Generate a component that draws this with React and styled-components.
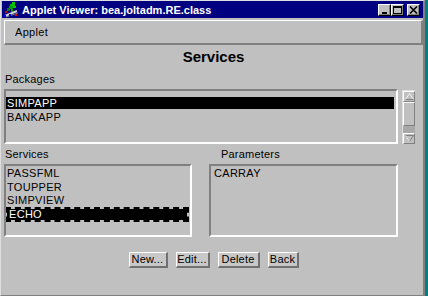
import React from 'react';
import styled, { createGlobalStyle } from 'styled-components';

const Global = createGlobalStyle`
  html, body { margin: 0; padding: 0; background: #008080; overflow: hidden; }
  body { font-family: "Liberation Sans", Arial, sans-serif; font-size: 11px; color: #000; }
  * { box-sizing: border-box; }
`;

const Window = styled.div`
  width: 425px;
  height: 296px;
  background: #c0c0c0;
  border-top: 1px solid #dfdfdf;
  border-left: 1px solid #dfdfdf;
  border-right: 2px solid #808080;
  border-bottom: 1px solid #808080;
  display: flex;
  flex-direction: column;
`;

const TitleBar = styled.div`
  height: 17px;
  margin-left: 1px;
  background: #000080;
  display: flex;
  align-items: center;
  padding: 0 3px 0 2px;
`;

const TitleText = styled.div`
  flex: 1;
  margin-left: 3px;
  color: #fff;
  font-weight: bold;
  font-size: 11px;
  white-space: nowrap;
`;

const WinButtons = styled.div`
  display: flex;
  align-items: center;
`;

const WinButton = styled.div`
  width: 13px;
  height: 12px;
  margin-left: ${p => p.$gap || 0}px;
  background: #c0c0c0;
  border-top: 1px solid #fff;
  border-left: 1px solid #fff;
  border-right: 1px solid #000;
  border-bottom: 1px solid #000;
  box-shadow: inset -1px -1px 0 #808080;
  display: flex;
  align-items: center;
  justify-content: center;
`;

const MenuBar = styled.div`
  height: 25px;
  margin: 2px 0 0 3px;
  border-top: 1px solid #fff;
  border-left: 1px solid #fff;
  border-bottom: 2px solid #808080;
  border-right: 2px solid #808080;
  display: flex;
  align-items: center;
  padding-left: 10px;
`;

const MenuItem = styled.span`
  font-size: 11px;
  letter-spacing: 0.3px;
`;

const Content = styled.div`
  display: flex;
  flex-direction: column;
  padding-left: 3px;
  padding-right: 8px;
`;

const Heading = styled.div`
  height: 24px;
  line-height: 24px;
  text-align: center;
  font-size: 15px;
  font-weight: bold;
  padding-left: 8px;
`;

const Label = styled.div`
  height: 20px;
  padding-top: 3px;
  line-height: 14px;
  padding-left: ${p => p.$indent || 1}px;
  letter-spacing: 0.2px;
`;

const PackagesRow = styled.div`
  display: flex;
  gap: 4px;
  height: 55px;
`;

const ListBox = styled.div`
  width: ${p => p.$w}px;
  height: ${p => p.$h}px;
  border-top: 2px solid #808080;
  border-left: 2px solid #808080;
  border-bottom: 2px solid #fff;
  border-right: 2px solid #fff;
  padding-top: ${p => p.$pt}px;
  padding-right: 2px;
  overflow: hidden;
`;

const Row = styled.div`
  height: ${p => p.$h}px;
  line-height: ${p => p.$h}px;
  margin-bottom: ${p => p.$gap || 0}px;
  padding-left: ${p => p.$indent || 1}px;
  white-space: nowrap;
  letter-spacing: 0.3px;
  background: ${p => (p.$selected ? '#000' : 'transparent')};
  color: ${p => (p.$selected ? '#fff' : '#000')};
`;

const FocusRow = styled.div`
  height: 15px;
  line-height: 11px;
  margin: -1px -1px -1px -1px;
  padding-left: 2px;
  border: 2px dashed #000;
  background: #000;
  background-clip: padding-box;
  color: #fff;
  letter-spacing: 0.3px;
`;

const ScrollBar = styled.div`
  width: 13px;
  height: 54px;
  margin-top: 1px;
  display: flex;
  flex-direction: column;
  background: #a8a8a8;
  border-left: 1px solid #dfdfdf;
  border-top: 1px solid #dfdfdf;
`;

const ArrowBtn = styled.div`
  height: 11px;
  background: #c0c0c0;
  border-top: 1px solid #fff;
  border-left: 1px solid #fff;
  border-right: 1px solid #808080;
  border-bottom: 1px solid #808080;
  display: flex;
  align-items: center;
  justify-content: center;
`;

const Thumb = styled.div`
  height: 24px;
  background: #c0c0c0;
  border-top: 1px solid #fff;
  border-left: 1px solid #fff;
  border-right: 1px solid #808080;
  border-bottom: 1px solid #808080;
`;

const Track = styled.div`
  flex: 1;
`;

const TwoCols = styled.div`
  display: grid;
  grid-template-columns: 188px 189px;
  column-gap: 17px;
`;

const ButtonRow = styled.div`
  display: flex;
  justify-content: center;
  gap: 8px;
  margin-top: 15px;
  padding-left: 8px;
`;

const Button = styled.div`
  height: 16px;
  width: ${p => p.$w}px;
  background: #c8c8c8;
  border-top: 1px solid #fff;
  border-left: 1px solid #fff;
  border-right: 2px solid #707070;
  border-bottom: 2px solid #707070;
  line-height: 13px;
  text-align: center;
  letter-spacing: 0.2px;
  white-space: nowrap;
`;

const AppIcon = () => (
  <svg width="15" height="16" viewBox="0 0 15 16">
    <rect x="8" y="0" width="3" height="2" fill="#00d000" />
    <rect x="6" y="2" width="5" height="2" fill="#00c000" />
    <rect x="5" y="4" width="4" height="3" fill="#00a000" />
    <rect x="9" y="4" width="3" height="2" fill="#00d000" />
    <rect x="3" y="6" width="3" height="3" fill="#008000" />
    <rect x="7" y="7" width="2" height="3" fill="#00a000" />
    <path d="M1 14 L13 9" stroke="#d0d0d0" strokeWidth="2" />
    <path d="M2 15 L14 11" stroke="#808080" strokeWidth="1" />
    <rect x="1" y="9" width="2" height="2" fill="#e00000" />
    <rect x="0" y="13" width="2" height="2" fill="#0000ff" />
    <rect x="11" y="12" width="2" height="2" fill="#e00000" />
    <rect x="5" y="12" width="2" height="2" fill="#0000c0" />
  </svg>
);

const UpArrow = () => (
  <svg width="9" height="7" viewBox="0 0 9 7">
    <path d="M4.5 0.5 L8.5 6.5 L0.5 6.5 Z" fill="none" stroke="#f0f0f0" strokeWidth="1" />
    <path d="M8.5 6.5 L0.5 6.5" stroke="#808080" strokeWidth="1" />
  </svg>
);

const DownArrow = () => (
  <svg width="9" height="7" viewBox="0 0 9 7">
    <path d="M0.5 0.5 L8.5 0.5 L4.5 6.5 Z" fill="none" stroke="#808080" strokeWidth="1" />
    <path d="M0.5 0.5 L4.5 6.5" stroke="#f0f0f0" strokeWidth="1" />
  </svg>
);

const MinGlyph = () => (
  <svg width="9" height="8" viewBox="0 0 9 8">
    <rect x="2" y="6" width="5" height="2" fill="#000" />
  </svg>
);

const MaxGlyph = () => (
  <svg width="9" height="8" viewBox="0 0 9 8">
    <rect x="0.5" y="0.5" width="8" height="7" fill="none" stroke="#000" />
    <rect x="0" y="0" width="9" height="2" fill="#000" />
  </svg>
);

const CloseGlyph = () => (
  <svg width="9" height="8" viewBox="0 0 9 8">
    <path d="M1 0.5 L8 7.5 M8 0.5 L1 7.5" stroke="#000" strokeWidth="1.6" />
  </svg>
);

export default function App() {
  const services = ['PASSFML', 'TOUPPER', 'SIMPVIEW'];
  const buttons = [
    ['New...', 39],
    ['Edit...', 34],
    ['Delete', 42],
    ['Back', 31],
  ];
  return (
    <>
      <Global />
      <Window>
        <TitleBar>
          <AppIcon />
          <TitleText>Applet Viewer: bea.joltadm.RE.class</TitleText>
          <WinButtons>
            <WinButton><MinGlyph /></WinButton>
            <WinButton><MaxGlyph /></WinButton>
            <WinButton $gap={3}><CloseGlyph /></WinButton>
          </WinButtons>
        </TitleBar>
        <MenuBar>
          <MenuItem>Applet</MenuItem>
        </MenuBar>
        <Content>
          <Heading>Services</Heading>
          <Label>Packages</Label>
          <PackagesRow>
            <ListBox $w={394} $h={55} $pt={6}>
              <Row $h={12} $gap={2} $selected>SIMPAPP</Row>
              <Row $h={12} $gap={2}>BANKAPP</Row>
            </ListBox>
            <ScrollBar>
              <ArrowBtn><UpArrow /></ArrowBtn>
              <Thumb />
              <Track />
              <ArrowBtn><DownArrow /></ArrowBtn>
            </ScrollBar>
          </PackagesRow>
          <TwoCols>
            <Label>Services</Label>
            <Label $indent={12}>Parameters</Label>
            <ListBox $w={188} $h={73} $pt={1}>
              {services.map(s => (
                <Row key={s} $h={13.5}>{s}</Row>
              ))}
              <FocusRow>ECHO</FocusRow>
            </ListBox>
            <ListBox $w={189} $h={73} $pt={1}>
              <Row $h={13.5} $indent={3}>CARRAY</Row>
            </ListBox>
          </TwoCols>
          <ButtonRow>
            {buttons.map(([t, w]) => (
              <Button key={t} $w={w}>{t}</Button>
            ))}
          </ButtonRow>
        </Content>
      </Window>
    </>
  );
}
